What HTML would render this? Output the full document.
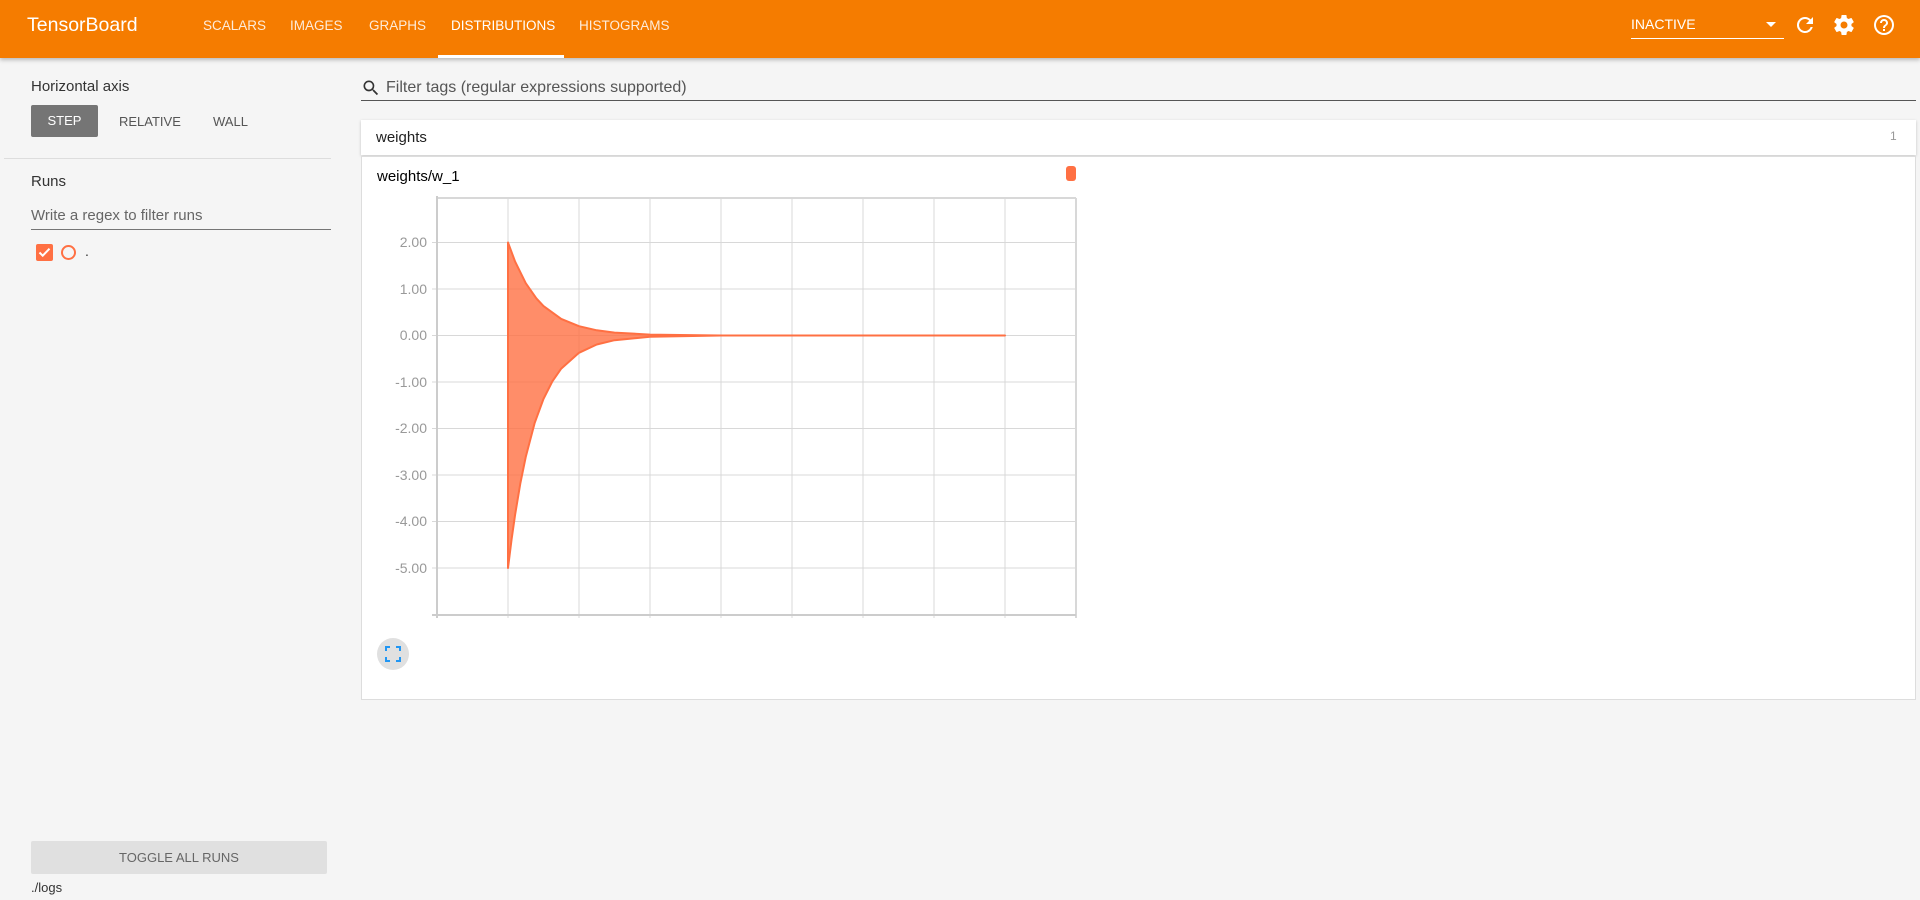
<!DOCTYPE html>
<html><head><meta charset="utf-8"><style>
*{box-sizing:border-box;margin:0;padding:0}
body{width:1920px;height:900px;background:#f5f5f5;font-family:"Liberation Sans",sans-serif;position:relative;overflow:hidden;color:#212121}
.a{position:absolute;white-space:nowrap}
#hdr{position:absolute;left:0;top:0;width:1920px;height:58px;background:#f57c00;box-shadow:0 2px 4px rgba(0,0,0,.25)}
.tab{position:absolute;top:18px;font-size:13.5px;color:rgba(255,255,255,.85);}
</style></head><body>
<div id="hdr">
<div class="a" style="left:27px;top:14px;font-size:19.5px;color:#fff">TensorBoard</div>
<div class="tab" style="left:203px">SCALARS</div>
<div class="tab" style="left:290px">IMAGES</div>
<div class="tab" style="left:369px">GRAPHS</div>
<div class="tab" style="left:451px;color:#fff">DISTRIBUTIONS</div>
<div class="tab" style="left:579px">HISTOGRAMS</div>
<div class="a" style="left:438px;top:55px;width:126px;height:3px;background:#fff"></div>
<div class="a" style="left:1631px;top:16px;font-size:14px;color:#fff">INACTIVE</div>
<div class="a" style="left:1766px;top:22px;width:0;height:0;border-left:5px solid transparent;border-right:5px solid transparent;border-top:5px solid #fff"></div>
<div class="a" style="left:1631px;top:38px;width:153px;height:1px;background:#fff"></div>
<svg class="a" style="left:1793px;top:13px" width="24" height="24" viewBox="0 0 24 24"><path fill="#fff" d="M17.65 6.35A7.96 7.96 0 0 0 12 4a8 8 0 1 0 7.730 10h-2.08A6 6 0 1 1 12 6c1.66 0 3.14.69 4.22 1.78L13 11h7V4l-2.35 2.35z"/></svg>
<svg class="a" style="left:1832px;top:13px" width="24" height="24" viewBox="0 0 24 24"><path fill="#fff" d="M19.43 12.98c.04-.32.07-.64.07-.98s-.03-.66-.07-.98l2.11-1.65c.19-.15.24-.42.12-.64l-2-3.46c-.12-.22-.39-.3-.61-.22l-2.49 1c-.52-.4-1.08-.73-1.690-.98l-.38-2.65A.49.49 0 0 0 14 2h-4c-.25 0-.46.18-.49.42l-.38 2.65c-.61.25-1.17.59-1.69.98l-2.49-1c-.23-.09-.49 0-.61.22l-2 3.46c-.13.22-.07.49.12.64l2.11 1.65c-.04.32-.07.65-.07.98s.03.66.07.98l-2.11 1.65c-.19.15-.24.42-.12.64l2 3.46c.12.22.39.3.61.22l2.49-1c.52.4 1.08.73 1.69.98l.38 2.65c.03.24.24.42.49.42h4c.25 0 .46-.18.49-.42l.38-2.65c.61-.25 1.17-.59 1.69-.98l2.49 1c.23.09.49 0 .61-.22l2-3.46c.12-.22.07-.49-.12-.64l-2.11-1.65zM12 15.5a3.5 3.5 0 1 1 0-7 3.5 3.5 0 0 1 0 7z"/></svg>
<svg class="a" style="left:1872px;top:13px" width="24" height="24" viewBox="0 0 24 24"><path fill="#fff" d="M11 18h2v-2h-2v2zm1-16a10 10 0 1 0 0 20 10 10 0 0 0 0-20zm0 18a8 8 0 1 1 0-16 8 8 0 0 1 0 16zm0-14a4 4 0 0 0-4 4h2a2 2 0 1 1 4 0c0 2-3 1.75-3 5h2c0-2.25 3-2.5 3-5a4 4 0 0 0-4-4z"/></svg>
</div>

<div class="a" style="left:31px;top:78px;font-size:15px;color:#333">Horizontal axis</div>
<div class="a" style="left:31px;top:105px;width:67px;height:32px;background:#757575;border-radius:2px;color:#fff;font-size:13px;text-align:center;line-height:32px">STEP</div>
<div class="a" style="left:119px;top:114px;font-size:13px;color:#555">RELATIVE</div>
<div class="a" style="left:213px;top:114px;font-size:13px;color:#555">WALL</div>
<div class="a" style="left:4px;top:158px;width:327px;height:1px;background:#ddd"></div>
<div class="a" style="left:31px;top:173px;font-size:15px;color:#333">Runs</div>
<div class="a" style="left:31px;top:207px;font-size:15px;color:#666">Write a regex to filter runs</div>
<div class="a" style="left:31px;top:229px;width:300px;height:1px;background:#757575"></div>
<div class="a" style="left:36px;top:244px;width:17px;height:17px;background:#ff7043;border-radius:2px"></div>
<svg class="a" style="left:36px;top:244px" width="17" height="17" viewBox="0 0 17 17"><path d="M3.5 8.5l3.2 3.2 6.8-7" stroke="#fff" stroke-width="2" fill="none"/></svg>
<div class="a" style="left:61px;top:245px;width:15px;height:15px;border:2px solid #ff7043;border-radius:50%"></div>
<div class="a" style="left:85px;top:243px;font-size:14px;color:#333">.</div>
<div class="a" style="left:31px;top:841px;width:296px;height:33px;background:#e0e0e0;border-radius:2px;font-size:13px;color:#666;text-align:center;line-height:33px">TOGGLE ALL RUNS</div>
<div class="a" style="left:31px;top:880px;font-size:13px;color:#333">./logs</div>

<svg class="a" style="left:361px;top:78px" width="20" height="20" viewBox="0 0 24 24"><path fill="#333" d="M15.5 14h-.79l-.28-.27A6.47 6.47 0 0 0 16 9.5 6.5 6.5 0 1 0 9.5 16c1.61 0 3.09-.59 4.23-1.57l.27.28v.79l5 4.99L20.49 19l-4.99-5zm-6 0C7.01 14 5 11.99 5 9.5S7.01 5 9.5 5 14 7.01 14 9.5 11.99 14 9.5 14z"/></svg>
<div class="a" style="left:386px;top:79px;font-size:16px;color:#555">Filter tags (regular expressions supported)</div>
<div class="a" style="left:361px;top:100px;width:1555px;height:1px;background:#555"></div>

<div class="a" style="left:361px;top:120px;width:1555px;height:35px;background:#fff;box-shadow:0 1px 3px rgba(0,0,0,.2)"></div>
<div class="a" style="left:376px;top:129px;font-size:15px;color:#212121">weights</div>
<div class="a" style="left:1890px;top:129px;font-size:12px;color:#999">1</div>
<div class="a" style="left:361px;top:156px;width:1555px;height:544px;background:#fff;border:1px solid #ddd"></div>
<div class="a" style="left:377px;top:168px;font-size:15px;color:#000">weights/w_1</div>
<div class="a" style="left:1066px;top:166px;width:10px;height:15px;background:#ff7043;border-radius:3px"></div>

<svg class="a" style="left:0;top:0" width="1920" height="900">
<g stroke="#d8d8d8" stroke-width="1">
<line x1="508" y1="198" x2="508" y2="618"/><line x1="579" y1="198" x2="579" y2="618"/><line x1="650" y1="198" x2="650" y2="618"/><line x1="721" y1="198" x2="721" y2="618"/><line x1="792" y1="198" x2="792" y2="618"/><line x1="863" y1="198" x2="863" y2="618"/><line x1="934" y1="198" x2="934" y2="618"/><line x1="1005" y1="198" x2="1005" y2="618"/>
<line x1="432" y1="242.5" x2="1076" y2="242.5"/><line x1="432" y1="289" x2="1076" y2="289"/><line x1="432" y1="335.5" x2="1076" y2="335.5"/><line x1="432" y1="382" x2="1076" y2="382"/><line x1="432" y1="428.5" x2="1076" y2="428.5"/><line x1="432" y1="475" x2="1076" y2="475"/><line x1="432" y1="521.5" x2="1076" y2="521.5"/><line x1="432" y1="568" x2="1076" y2="568"/>
<line x1="437" y1="198" x2="1076" y2="198" stroke-width="2"/><line x1="1076" y1="198" x2="1076" y2="618" stroke-width="2"/>
</g>
<line x1="437" y1="196" x2="437" y2="618" stroke="#ccc" stroke-width="2"/>
<line x1="432" y1="615" x2="1076" y2="615" stroke="#ccc" stroke-width="2"/>
<g font-family="Liberation Sans" font-size="14" fill="#999" text-anchor="end">
<text x="427" y="247">2.00</text><text x="427" y="294">1.00</text><text x="427" y="340">0.00</text><text x="427" y="387">-1.00</text><text x="427" y="433">-2.00</text><text x="427" y="480">-3.00</text><text x="427" y="526">-4.00</text><text x="427" y="573">-5.00</text>
</g>
<path d="M508 242.5 L515.1 261.6 L525.75 283.2 L536.4 298.4 L543.5 306.1 L561.25 318.9 L579 326.2 L596.75 330.3 L614.5 332.6 L650 334.6 L721 335.5 L1005 335.5 L721 335.5 L650 336.8 L614.5 340.2 L596.75 344.5 L579 352.8 L561.25 368.6 L552.4 381.3 L543.5 398.9 L534.6 423.2 L525.75 456.9 L520.4 483 L515.1 514.7 L511.55 539.6 L508 568 Z" fill="#ff7043" fill-opacity="0.8" stroke="#ff7043" stroke-width="2" stroke-linejoin="round"/>
<circle cx="393" cy="654" r="16" fill="#e0e0e0"/>
<path d="M386 651v-4h4M396 647h4v4M400 657v4h-4M390 661h-4v-4" stroke="#2196f3" stroke-width="2" fill="none"/>
</svg>
</body></html>
